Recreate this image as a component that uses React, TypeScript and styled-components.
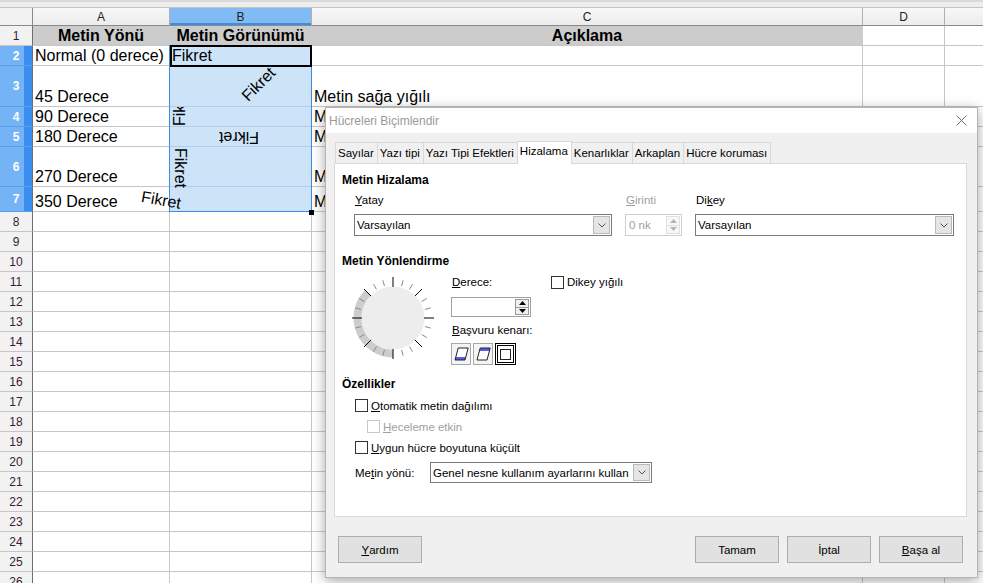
import React from "react";
import styled, { createGlobalStyle } from "styled-components";

const GRID = "#c6c6c6";
const SEL_BG = "#cde3f8";
const SEL_LINE = "#b3cde8";
const SEL_BLUE = "#3b8de6";
const UI_FONT = `"Liberation Sans", Arial, sans-serif`;

/* heights of rows 1..26, bottom grid line included */
const ROW_HEIGHTS = [20, 20, 41, 20, 20, 40, 25, ...Array(19).fill(20)];
const COLUMNS = ["A", "B", "C", "D", "E"];

const GlobalStyle = createGlobalStyle`
  html, body { margin: 0; padding: 0; background: #fff; }
  body { font-family: ${UI_FONT}; overflow: hidden; }
  * { box-sizing: border-box; }
`;

/* spreadsheet */
const Sheet = styled.div`
  position: relative;
  width: 983px;
  height: 583px;
  overflow: hidden;
  display: grid;
  grid-template-columns: 33px 137px 142px 551px 82px 110px;
  grid-template-rows: 8px 18px ${ROW_HEIGHTS.map((h) => h + "px").join(" ")};
`;

const TopStrip = styled.div`
  grid-column: 1 / -1;
  background: #eeeeee;
  border-top: 2px solid #dadada;
  border-bottom: 1px solid #c2c2c2;
`;

const Corner = styled.div`
  background: #f2f2f2;
  border-right: 1px solid #8a8a8a;
  border-bottom: 1px solid #8a8a8a;
`;

const ColHead = styled.div<{ $sel?: boolean }>`
  display: flex;
  align-items: center;
  justify-content: center;
  font-size: 12px;
  color: #222;
  background: ${(p) => (p.$sel ? "#80bbf4" : "linear-gradient(#f8f8f8, #ececec)")};
  border-right: 1px solid #b0b0b0;
  border-bottom: 1px solid #8a8a8a;
  box-shadow: ${(p) => (p.$sel ? `inset 0 -2px 0 ${SEL_BLUE}` : "none")};
`;

const RowHead = styled.div<{ $sel?: boolean }>`
  display: flex;
  align-items: center;
  justify-content: center;
  font-size: 12px;
  color: ${(p) => (p.$sel ? "#fff" : "#3a1a3a")};
  font-weight: ${(p) => (p.$sel ? "bold" : "normal")};
  background: ${(p) =>
    p.$sel ? "linear-gradient(to right, #74b4f6 0 76%, #3a8ef0 76%)" : "#f2f2f2"};
  border-right: 1px solid #6e6e6e;
  border-bottom: 1px solid ${(p) => (p.$sel ? "#5a9ee8" : GRID)};
`;

type Tone = "plain" | "title" | "sel";

const Cell = styled.div<{ $tone?: Tone; $clip?: boolean }>`
  position: relative;
  display: flex;
  align-items: flex-end;
  justify-content: ${(p) => (p.$tone === "title" ? "center" : "flex-start")};
  padding: 0 2px;
  font-size: 16px;
  line-height: 18px;
  font-weight: ${(p) => (p.$tone === "title" ? "bold" : "normal")};
  white-space: nowrap;
  overflow: ${(p) => (p.$clip ? "hidden" : "visible")};
  background: ${(p) =>
    p.$tone === "title" ? "#cccccc" : p.$tone === "sel" ? SEL_BG : "#fff"};
  border-right: 1px solid ${(p) => (p.$tone === "title" ? "#cccccc" : GRID)};
  border-bottom: 1px solid ${(p) => (p.$tone === "sel" ? SEL_LINE : GRID)};
`;

/* rotated cell text */
const Turned = styled.span<{ $angle: number; $x: number; $y: number; $origin: string }>`
  position: absolute;
  left: ${(p) => p.$x}px;
  top: ${(p) => p.$y}px;
  z-index: 1;
  line-height: 18px;
  white-space: nowrap;
  transform-origin: ${(p) => p.$origin};
  transform: rotate(${(p) => p.$angle}deg);
`;

const SelFrame = styled.div`
  position: absolute;
  left: 169px;
  top: 45px;
  width: 143px;
  height: 167px;
  border: 1px solid ${SEL_BLUE};
  pointer-events: none;
`;

const CursorBox = styled.div`
  position: absolute;
  left: 170px;
  top: 45px;
  width: 142px;
  height: 22px;
  border: 2px solid #000;
  pointer-events: none;
`;

const FillHandle = styled.div`
  position: absolute;
  left: 309px;
  top: 210px;
  width: 5px;
  height: 5px;
  background: #000;
`;

/* dialog */
const Dialog = styled.section`
  position: absolute;
  left: 325px;
  top: 107px;
  width: 653px;
  height: 471px;
  z-index: 5;
  display: flex;
  flex-direction: column;
  border: 1px solid #b4b4b4;
  background: #f0f0f0;
  box-shadow: 0 3px 12px rgba(0, 0, 0, 0.35);
  font-family: ${UI_FONT};
  font-size: 11.5px;
  line-height: 16px;
  color: #000;
`;

const TitleBar = styled.header`
  height: 25px;
  flex: none;
  display: flex;
  align-items: center;
  justify-content: space-between;
  padding: 0 10px 0 3px;
  background: #fff;
  color: #9a9a9a;
  font-size: 12px;
`;

const Body = styled.div`
  flex: 1;
  display: flex;
  flex-direction: column;
  padding: 8px 10px 0 8px;
`;

const TabList = styled.div`
  display: flex;
  align-items: flex-end;
  height: 22px;
  padding-left: 1px;
`;

const Tab = styled.div<{ $active?: boolean }>`
  position: relative;
  z-index: ${(p) => (p.$active ? 2 : 1)};
  height: ${(p) => (p.$active ? 23 : 21)}px;
  margin-bottom: ${(p) => (p.$active ? -1 : 0)}px;
  margin-right: -1px;
  padding: 0 3px 0 2px;
  line-height: ${(p) => (p.$active ? 19 : 20)}px;
  border: 1px solid #d9d9d9;
  border-bottom: none;
  background: ${(p) => (p.$active ? "#fff" : "#f0f0f0")};
  white-space: nowrap;
`;

const Panel = styled.div`
  position: relative;
  z-index: 0;
  height: 354px;
  display: flex;
  flex-direction: column;
  padding: 8px 7px;
  border: 1px solid #d9d9d9;
  background: #fff;
`;

const Heading = styled.div<{ $gap: number }>`
  margin-top: ${(p) => p.$gap}px;
  font-size: 12px;
  font-weight: bold;
  line-height: 16px;
`;

const Key = styled.span`
  text-decoration: underline;
  text-underline-offset: 1px;
`;

const AlignRow = styled.div`
  display: flex;
  gap: 13px;
  margin-top: 4px;
  padding-left: 12px;
`;

const Field = styled.div<{ $w: number }>`
  width: ${(p) => p.$w}px;
  display: flex;
  flex-direction: column;
  gap: 6px;
`;

const FieldLabel = styled.div<{ $off?: boolean }>`
  padding-left: 1px;
  line-height: 16px;
  white-space: nowrap;
  color: ${(p) => (p.$off ? "#a0a0a0" : "#000")};
`;

const SelectBox = styled.div<{ $h: number; $w?: number }>`
  height: ${(p) => p.$h}px;
  width: ${(p) => (p.$w ? p.$w + "px" : "auto")};
  display: flex;
  border: 1px solid #7a7a7a;
  background: #fff;
`;

const SelectText = styled.span`
  flex: 1;
  display: flex;
  align-items: center;
  padding-left: 2px;
  white-space: nowrap;
  overflow: hidden;
`;

const DropBtn = styled.span`
  width: 17px;
  margin: 1px;
  display: flex;
  align-items: center;
  justify-content: center;
  border: 1px solid #b9b9b9;
  background: #e5e5e5;
`;

const SpinBox = styled.div<{ $h: number; $off?: boolean }>`
  height: ${(p) => p.$h}px;
  display: flex;
  border: 1px solid ${(p) => (p.$off ? "#cfcfcf" : "#a0a0a0")};
  background: #fff;
  color: ${(p) => (p.$off ? "#a0a0a0" : "#000")};
`;

const SpinText = styled.span`
  flex: 1;
  display: flex;
  align-items: center;
  padding-left: 3px;
`;

const SpinBtns = styled.span`
  width: 16px;
  display: flex;
  flex-direction: column;
  padding: 1px;
`;

const SpinBtn = styled.span<{ $off?: boolean }>`
  flex: 1;
  display: flex;
  align-items: center;
  justify-content: center;
  border: 1px solid ${(p) => (p.$off ? "#e0e0e0" : "#9a9a9a")};
  background: ${(p) => (p.$off ? "#f7f7f7" : "#f0f0f0")};
  & + & {
    border-top: none;
  }
`;

const OrientRow = styled.div`
  display: flex;
  align-items: flex-start;
  margin-top: 5px;
  padding-left: 9px;
`;

const DialWrap = styled.div`
  margin-top: 2px;
  width: 84px;
  height: 84px;
`;

const DegreeCol = styled.div`
  width: 80px;
  margin-left: 16px;
  display: flex;
  flex-direction: column;
`;

const Gap = styled.div<{ $h: number }>`
  height: ${(p) => p.$h}px;
`;

const EdgeGroup = styled.div`
  display: flex;
  gap: 2px;
`;

const EdgeBtn = styled.span<{ $on?: boolean }>`
  width: ${(p) => (p.$on ? 21 : 20)}px;
  height: 22px;
  display: flex;
  align-items: center;
  justify-content: center;
  border: ${(p) => (p.$on ? "3px double #000" : "1px solid #a8a8a8")};
  background: ${(p) => (p.$on ? "#fff" : "#f4f4f4")};
`;

const CheckRow = styled.div<{ $indent?: number; $h?: number; $off?: boolean }>`
  height: ${(p) => p.$h ?? 21}px;
  display: flex;
  align-items: center;
  gap: 3px;
  padding-left: ${(p) => p.$indent ?? 0}px;
  color: ${(p) => (p.$off ? "#a0a0a0" : "#000")};
  white-space: nowrap;
`;

const CheckBox = styled.span<{ $off?: boolean }>`
  flex: none;
  width: 13px;
  height: 13px;
  border: 1px solid ${(p) => (p.$off ? "#c8c8c8" : "#333")};
  background: #fff;
`;

const StackedCheck = styled(CheckRow)`
  margin-left: 20px;
`;

const DirRow = styled.div`
  height: 21px;
  margin-top: 4px;
  padding-left: 13px;
  display: flex;
  align-items: center;
`;

const DirLabel = styled.span`
  width: 75px;
`;

const ButtonBar = styled.div`
  margin-top: 19px;
  padding: 0 4px;
  display: flex;
  gap: 8px;
`;

const PushButton = styled.span`
  width: 84px;
  height: 27px;
  display: flex;
  align-items: center;
  justify-content: center;
  border: 1px solid #adadad;
  background: #e1e1e1;
`;

const Spacer = styled.span`
  flex: 1;
`;

/* small drawings */
const Chevron = () => (
  <svg width="8" height="5" viewBox="0 0 8 5">
    <path d="M0.5 0.5 L4 4 L7.5 0.5" fill="none" stroke="#555" strokeWidth="1" />
  </svg>
);

const Tri = ({ up, color }: { up?: boolean; color: string }) => (
  <svg width="7" height="4" viewBox="0 0 7 4">
    <path d={up ? "M0 4 L3.5 0 L7 4Z" : "M0 0 L3.5 4 L7 0Z"} fill={color} />
  </svg>
);

const CloseIcon = () => (
  <svg width="11" height="11" viewBox="0 0 11 11">
    <path d="M0.5 0.5 L10.5 10.5 M10.5 0.5 L0.5 10.5" stroke="#6b6b6b" strokeWidth="1" />
  </svg>
);

const Dial = () => {
  const c = 42;
  const rad = (d: number) => (d * Math.PI) / 180;
  const ring = 35.5;
  const end = { x: c + ring * Math.cos(rad(225)), y: c + ring * Math.sin(rad(225)) };
  return (
    <svg width="84" height="84" viewBox="0 0 84 84">
      <path
        d={`M ${c} ${c + ring} A ${ring} ${ring} 0 0 1 ${end.x} ${end.y}`}
        fill="none"
        stroke="#cdcdcd"
        strokeWidth="8"
      />
      <circle cx={c} cy={c} r={31.5} fill="#ededed" />
      {Array.from({ length: 24 }, (_, i) => {
        const a = rad(i * 15);
        const major = i % 3 === 0;
        const r1 = major ? 31 : 33;
        const r2 = major ? 41 : 39;
        return (
          <line
            key={i}
            x1={c + r1 * Math.cos(a)}
            y1={c + r1 * Math.sin(a)}
            x2={c + r2 * Math.cos(a)}
            y2={c + r2 * Math.sin(a)}
            stroke={major ? "#000" : "#8a8a8a"}
            strokeWidth="1"
          />
        );
      })}
    </svg>
  );
};

const EdgeIcon = ({ kind }: { kind: "bottom" | "top" | "box" }) => {
  if (kind === "box")
    return (
      <svg width="11" height="11" viewBox="0 0 11 11">
        <rect x="0.5" y="0.5" width="10" height="10" fill="#fff" stroke="#222" />
      </svg>
    );
  const band = kind === "bottom" ? "1,13 11,13 11.7,10 1.7,10" : "4.2,1 14.2,1 13.5,4 3.5,4";
  return (
    <svg width="15" height="14" viewBox="0 0 15 14">
      <polygon points="1,13 11,13 14.2,1 4.2,1" fill="#fff" />
      <polygon points={band} fill="#5b5bea" />
      <polygon points="1,13 11,13 14.2,1 4.2,1" fill="none" stroke="#222" strokeWidth="1" />
    </svg>
  );
};

/* sheet data */
type RowData = { a?: string; b?: React.ReactNode; c?: string; title?: boolean; clip?: boolean };

const ROWS: RowData[] = [
  { a: "Metin Yönü", b: "Metin Görünümü", c: "Açıklama", title: true },
  { a: "Normal (0 derece)", b: "Fikret" },
  {
    a: "45 Derece",
    b: (
      <Turned $angle={-45} $x={81} $y={21} $origin="0 100%">
        Fikret
      </Turned>
    ),
    c: "Metin sağa yığılı",
  },
  {
    a: "90 Derece",
    b: (
      <Turned $angle={-90} $x={1} $y={19} $origin="0 0">
        Fikret
      </Turned>
    ),
    c: "Metin yukarı doğru",
    clip: true,
  },
  {
    a: "180 Derece",
    b: (
      <Turned $angle={180} $x={89} $y={19} $origin="0 0">
        Fikret
      </Turned>
    ),
    c: "Metin ters çevrilmiş",
  },
  {
    a: "270 Derece",
    b: (
      <Turned $angle={90} $x={19} $y={1} $origin="0 0">
        Fikret
      </Turned>
    ),
    c: "Metin aşağı doğru",
  },
  {
    a: "350 Derece",
    b: (
      <Turned $angle={10} $x={-27} $y={1} $origin="0 0">
        Fikret
      </Turned>
    ),
    c: "Metin hafif eğik",
  },
];

const TABS = [
  "Sayılar",
  "Yazı tipi",
  "Yazı Tipi Efektleri",
  "Hizalama",
  "Kenarlıklar",
  "Arkaplan",
  "Hücre koruması",
];

const FormatDialog = () => (
  <Dialog>
    <TitleBar>
      <span>Hücreleri Biçimlendir</span>
      <CloseIcon />
    </TitleBar>
    <Body>
      <TabList>
        {TABS.map((t) => (
          <Tab key={t} $active={t === "Hizalama"}>
            {t}
          </Tab>
        ))}
      </TabList>
      <Panel>
        <Heading $gap={0}>Metin Hizalama</Heading>
        <AlignRow>
          <Field $w={258}>
            <FieldLabel>
              <Key>Y</Key>atay
            </FieldLabel>
            <SelectBox $h={22}>
              <SelectText>Varsayılan</SelectText>
              <DropBtn>
                <Chevron />
              </DropBtn>
            </SelectBox>
          </Field>
          <Field $w={57}>
            <FieldLabel $off>
              <Key>G</Key>irinti
            </FieldLabel>
            <SpinBox $h={22} $off>
              <SpinText>0 nk</SpinText>
              <SpinBtns>
                <SpinBtn $off>
                  <Tri up color="#b4b4b4" />
                </SpinBtn>
                <SpinBtn $off>
                  <Tri color="#b4b4b4" />
                </SpinBtn>
              </SpinBtns>
            </SpinBox>
          </Field>
          <Field $w={259}>
            <FieldLabel>
              Di<Key>k</Key>ey
            </FieldLabel>
            <SelectBox $h={22}>
              <SelectText>Varsayılan</SelectText>
              <DropBtn>
                <Chevron />
              </DropBtn>
            </SelectBox>
          </Field>
        </AlignRow>

        <Heading $gap={17}>Metin Yönlendirme</Heading>
        <OrientRow>
          <DialWrap>
            <Dial />
          </DialWrap>
          <DegreeCol>
            <FieldLabel>
              <Key>D</Key>erece:
            </FieldLabel>
            <Gap $h={7} />
            <SpinBox $h={20}>
              <SpinText />
              <SpinBtns>
                <SpinBtn>
                  <Tri up color="#000" />
                </SpinBtn>
                <SpinBtn>
                  <Tri color="#000" />
                </SpinBtn>
              </SpinBtns>
            </SpinBox>
            <Gap $h={5} />
            <FieldLabel>
              <Key>B</Key>aşvuru kenarı:
            </FieldLabel>
            <Gap $h={5} />
            <EdgeGroup>
              <EdgeBtn>
                <EdgeIcon kind="bottom" />
              </EdgeBtn>
              <EdgeBtn>
                <EdgeIcon kind="top" />
              </EdgeBtn>
              <EdgeBtn $on>
                <EdgeIcon kind="box" />
              </EdgeBtn>
            </EdgeGroup>
          </DegreeCol>
          <StackedCheck $h={16}>
            <CheckBox />
            <span>Dikey yığılı</span>
          </StackedCheck>
        </OrientRow>

        <Heading $gap={11}>Özellikler</Heading>
        <Gap $h={3} />
        <CheckRow $indent={13}>
          <CheckBox />
          <span>
            <Key>O</Key>tomatik metin dağılımı
          </span>
        </CheckRow>
        <CheckRow $indent={25} $off>
          <CheckBox $off />
          <span>
            <Key>H</Key>eceleme etkin
          </span>
        </CheckRow>
        <CheckRow $indent={13}>
          <CheckBox />
          <span>
            <Key>U</Key>ygun hücre boyutuna küçült
          </span>
        </CheckRow>
        <DirRow>
          <DirLabel>
            Me<Key>t</Key>in yönü:
          </DirLabel>
          <SelectBox $h={21} $w={222}>
            <SelectText>Genel nesne kullanım ayarlarını kullan</SelectText>
            <DropBtn>
              <Chevron />
            </DropBtn>
          </SelectBox>
        </DirRow>
      </Panel>
      <ButtonBar>
        <PushButton>
          <Key>Y</Key>ardım
        </PushButton>
        <Spacer />
        <PushButton>Tamam</PushButton>
        <PushButton>İptal</PushButton>
        <PushButton>
          <Key>B</Key>aşa al
        </PushButton>
      </ButtonBar>
    </Body>
  </Dialog>
);

export default function App() {
  return (
    <>
      <GlobalStyle />
      <Sheet>
        <TopStrip />
        <Corner />
        {COLUMNS.map((c) => (
          <ColHead key={c} $sel={c === "B"}>
            {c}
          </ColHead>
        ))}
        {ROW_HEIGHTS.map((_, i) => {
          const r = ROWS[i] ?? {};
          const n = i + 1;
          const sel = n >= 2 && n <= 7;
          const tone: Tone = r.title ? "title" : "plain";
          return (
            <React.Fragment key={n}>
              <RowHead $sel={sel}>{n}</RowHead>
              <Cell $tone={tone}>{r.a}</Cell>
              <Cell $tone={r.title ? "title" : sel ? "sel" : "plain"} $clip={r.clip}>
                {r.b}
              </Cell>
              <Cell $tone={tone}>{r.c}</Cell>
              <Cell />
              <Cell />
            </React.Fragment>
          );
        })}
        <SelFrame />
        <CursorBox />
        <FillHandle />
        <FormatDialog />
      </Sheet>
    </>
  );
}
